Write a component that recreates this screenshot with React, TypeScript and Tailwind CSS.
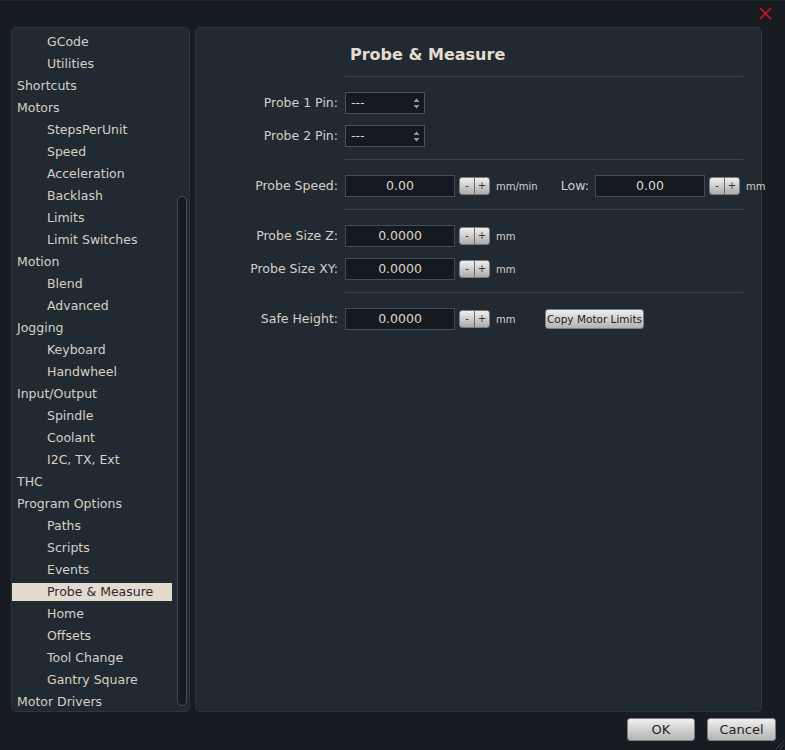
import React from 'react'

const treeItems: { label: string; child?: boolean; selected?: boolean }[] = [
  { label: 'GCode', child: true },
  { label: 'Utilities', child: true },
  { label: 'Shortcuts' },
  { label: 'Motors' },
  { label: 'StepsPerUnit', child: true },
  { label: 'Speed', child: true },
  { label: 'Acceleration', child: true },
  { label: 'Backlash', child: true },
  { label: 'Limits', child: true },
  { label: 'Limit Switches', child: true },
  { label: 'Motion' },
  { label: 'Blend', child: true },
  { label: 'Advanced', child: true },
  { label: 'Jogging' },
  { label: 'Keyboard', child: true },
  { label: 'Handwheel', child: true },
  { label: 'Input/Output' },
  { label: 'Spindle', child: true },
  { label: 'Coolant', child: true },
  { label: 'I2C, TX, Ext', child: true },
  { label: 'THC' },
  { label: 'Program Options' },
  { label: 'Paths', child: true },
  { label: 'Scripts', child: true },
  { label: 'Events', child: true },
  { label: 'Probe & Measure', child: true, selected: true },
  { label: 'Home', child: true },
  { label: 'Offsets', child: true },
  { label: 'Tool Change', child: true },
  { label: 'Gantry Square', child: true },
  { label: 'Motor Drivers' },
]

function Stepper() {
  return (
    <div className="ml-[4px] flex h-[18px] w-[31px] shrink-0 overflow-hidden rounded-[3px] border border-[#7d7d7d] bg-gradient-to-b from-[#f0f0f0] to-[#acacac] text-[10px] leading-[16px] text-[#333]">
      <span className="flex-1 text-center">-</span>
      <span className="w-px bg-[#6b6b6b]" />
      <span className="flex-1 text-center">+</span>
    </div>
  )
}

function NumField({ value }: { value: string }) {
  return (
    <div className="h-[22px] w-[110px] shrink-0 border border-[#3f4e58] bg-[#141a1f] text-center text-[12.5px] leading-[20px] text-[#ddd7cf]">
      {value}
    </div>
  )
}

function Label({ text }: { text: string }) {
  return <span className="w-[143px] shrink-0 pr-[1px] text-right">{text}</span>
}

function Combo() {
  return (
    <div className="ml-[6px] flex h-[22px] w-[80px] items-center justify-between border border-[#44525c] bg-[#141a1f] pl-[5px] pr-[4px]">
      <span className="text-[12.5px] text-[#ddd7cf]">---</span>
      <svg width="7" height="11" viewBox="0 0 7 11">
        <path d="M3.5 0.5 L6.5 4 L0.5 4 Z" fill="#9a9a9a" />
        <path d="M0.5 7 L6.5 7 L3.5 10.5 Z" fill="#9a9a9a" />
      </svg>
    </div>
  )
}

function Divider({ mt }: { mt: string }) {
  return <div className={`${mt} ml-[149px] h-px w-[398px] bg-[#36454f]`} />
}

function Unit({ text }: { text: string }) {
  return <span className="ml-[6px] w-[49px] shrink-0 text-[10px]">{text}</span>
}

export default function App() {
  return (
    <div className="relative flex h-[750px] w-[785px] flex-col overflow-hidden border-t border-[#232b32] bg-[#161c21] font-['DejaVu_Sans',sans-serif] text-[12.5px] text-[#d6d0c8]">
      {/* title bar */}
      <div className="flex h-[26px] justify-end pr-[13px] pt-[6px]">
        <svg width="13" height="13" viewBox="0 0 13 13">
          <path d="M1 1 L12 12 M12 1 L1 12" stroke="#b11b24" strokeWidth="1.8" />
        </svg>
      </div>

      <div className="flex gap-[5px] pl-[11px]">
        {/* tree panel */}
        <div className="flex h-[685px] w-[179px] rounded-[5px] border border-[#2c3840] bg-[#212a31]">
          <div className="w-[160px] overflow-hidden pt-[5px]">
            {treeItems.map((it) => (
              <div
                key={it.label}
                className={`mb-[4px] h-[18px] whitespace-nowrap leading-[18px] ${it.child ? 'pl-[35px]' : 'pl-[5px]'} ${it.selected ? 'bg-[#e3dad0] text-[#2b2b2b]' : ''}`}
              >
                {it.label}
              </div>
            ))}
          </div>
          <div className="ml-[5px] w-[10px]">
            <div className="mt-[168px] h-[510px] rounded-full border border-[#3f505b] bg-[#151b20]" />
          </div>
        </div>

        {/* content panel */}
        <div className="h-[685px] w-[567px] whitespace-nowrap rounded-[5px] border border-[#2c3840] bg-[#212a31]">
          <div className="pl-[154px] pt-[17px] text-[16px] font-bold leading-[20px] text-[#e4dcd2]">
            Probe &amp; Measure
          </div>
          <Divider mt="mt-[11px]" />

          <div className="mt-[15px] flex items-center">
            <Label text="Probe 1 Pin:" />
            <Combo />
          </div>
          <div className="mt-[11px] flex items-center">
            <Label text="Probe 2 Pin:" />
            <Combo />
          </div>

          <Divider mt="mt-[12px]" />

          <div className="mt-[15px] flex items-center">
            <Label text="Probe Speed:" />
            <div className="ml-[6px]">
              <NumField value="0.00" />
            </div>
            <Stepper />
            <Unit text="mm/min" />
            <span className="w-[44px] shrink-0 text-right">Low:</span>
            <div className="ml-[6px]">
              <NumField value="0.00" />
            </div>
            <Stepper />
            <span className="ml-[6px] shrink-0 text-[10px]">mm</span>
          </div>

          <Divider mt="mt-[12px]" />

          <div className="mt-[15px] flex items-center">
            <Label text="Probe Size Z:" />
            <div className="ml-[6px]">
              <NumField value="0.0000" />
            </div>
            <Stepper />
            <Unit text="mm" />
          </div>
          <div className="mt-[11px] flex items-center">
            <Label text="Probe Size XY:" />
            <div className="ml-[6px]">
              <NumField value="0.0000" />
            </div>
            <Stepper />
            <Unit text="mm" />
          </div>

          <Divider mt="mt-[12px]" />

          <div className="mt-[15px] flex items-center">
            <Label text="Safe Height:" />
            <div className="ml-[6px]">
              <NumField value="0.0000" />
            </div>
            <Stepper />
            <Unit text="mm" />
            <button className="h-[20px] w-[99px] rounded-[3px] border border-[#7d7d7d] bg-gradient-to-b from-[#eeeeee] to-[#b3b3b3] text-[10.5px] leading-[18px] text-[#222]">
              Copy Motor Limits
            </button>
          </div>
        </div>
      </div>

      {/* footer buttons */}
      <div className="mt-[6px] flex justify-end gap-[12px] pr-[9px]">
        <button className="h-[23px] w-[68px] rounded-[3px] border border-[#7d7d7d] bg-gradient-to-b from-[#efefef] to-[#b4b4b4] text-[13px] text-[#1f1f1f]">
          OK
        </button>
        <button className="h-[23px] w-[69px] rounded-[3px] border border-[#7d7d7d] bg-gradient-to-b from-[#efefef] to-[#b4b4b4] text-[13px] text-[#1f1f1f]">
          Cancel
        </button>
      </div>

      {/* resize grip */}
      <svg className="absolute bottom-0 right-0" width="11" height="11" viewBox="0 0 11 11">
        <path d="M10 2 L2 10 M10 6 L6 10" stroke="#3a444c" strokeWidth="1" />
      </svg>
    </div>
  )
}
